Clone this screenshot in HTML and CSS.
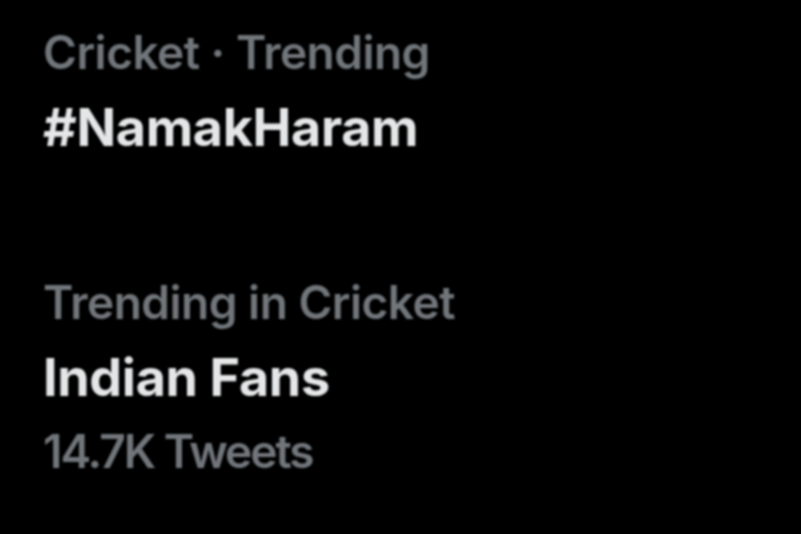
FILE: index.html
```html
<!DOCTYPE html>
<html>
<head>
<meta charset="utf-8">
<link rel="stylesheet" href="styles.css">
</head>
<body>
<main class="list">
  <section class="trend">
    <div class="meta">Cricket · Trending</div>
    <div class="title">#NamakHaram</div>
  </section>
  <section class="trend">
    <div class="meta">Trending in Cricket</div>
    <div class="title">Indian Fans</div>
    <div class="count">14.7K Tweets</div>
  </section>
</main>
</body>
</html>
```
FILE: styles.css
```css
html, body {
  margin: 0;
  padding: 0;
  background: #000;
  width: 801px;
  height: 534px;
  overflow: hidden;
}
.list {
  display: flex;
  flex-direction: column;
  gap: 100px;
  padding: 15px 0 0 43px;
  font-family: Inter, "Noto Sans", sans-serif;
  filter: blur(1.2px);
}
.trend {
  display: flex;
  flex-direction: column;
}
.meta, .count {
  color: #71767b;
  font-size: 46px;
  font-weight: 600;
  line-height: 75px;
  letter-spacing: -0.5px;
}
.title {
  color: #e4e6e7;
  font-size: 52px;
  font-weight: 700;
  line-height: 75px;
  letter-spacing: -0.3px;
}
.count {
  line-height: 72px;
  letter-spacing: -2px;
}
```
